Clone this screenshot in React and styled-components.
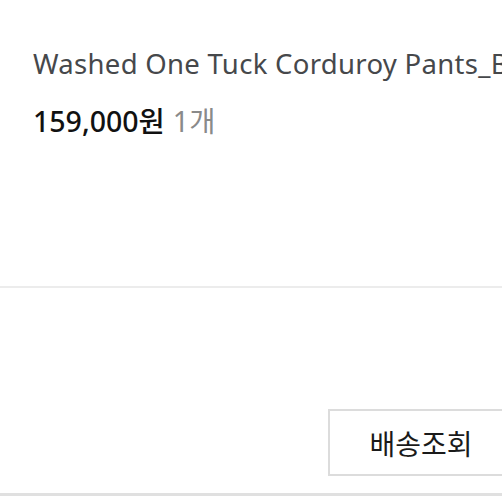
import React from "react";
import styled, { createGlobalStyle } from "styled-components";

const GlobalStyle = createGlobalStyle`
  html, body {
    margin: 0;
    padding: 0;
    background: #ffffff;
  }
  body {
    font-family: "Noto Sans", "Noto Sans CJK KR", sans-serif;
  }
`;

const Page = styled.div`
  width: 502px;
  height: 502px;
  overflow: hidden;
  background: #fff;
  display: flex;
  flex-direction: column;
`;

const ProductInfo = styled.section`
  padding: 45px 0 0 33px;
  height: 286px;
  box-sizing: border-box;
  display: flex;
  flex-direction: column;
  gap: 19px;
`;

const Title = styled.div`
  font-size: 27.5px;
  font-weight: 400;
  letter-spacing: 0.3px;
  line-height: 38px;
  color: #46484b;
  white-space: nowrap;
`;

const PriceRow = styled.div`
  font-size: 28.5px;
  font-weight: 500;
  line-height: 38px;
  color: #111;
  white-space: nowrap;
  display: flex;
  align-items: baseline;
  gap: 8px;
`;

const Count = styled.span`
  color: #8a8a8a;
  font-weight: 400;
`;

const Divider = styled.hr`
  margin: 0;
  border: none;
  border-top: 2px solid #ececec;
`;

const Actions = styled.div`
  height: 208px;
  box-sizing: border-box;
  display: flex;
  justify-content: flex-end;
  align-items: flex-start;
  padding-top: 121px;
  margin-right: -12px;
  border-bottom: 3px solid #e0e0e0;
`;

const OutlineButton = styled.button`
  width: 186px;
  height: 67px;
  background: #fff;
  border: 2px solid #dcdcdc;
  font-family: "Noto Sans CJK KR", "Noto Sans", sans-serif;
  font-size: 28px;
  color: #1a1a1a;
  cursor: pointer;
`;

export default function App() {
  return (
    <>
      <GlobalStyle />
      <Page>
        <ProductInfo>
          <Title>Washed One Tuck Corduroy Pants_Brown</Title>
          <PriceRow>
            <span>159,000원</span>
            <Count>1개</Count>
          </PriceRow>
        </ProductInfo>
        <Divider />
        <Actions>
          <OutlineButton>배송조회</OutlineButton>
        </Actions>
      </Page>
    </>
  );
}
